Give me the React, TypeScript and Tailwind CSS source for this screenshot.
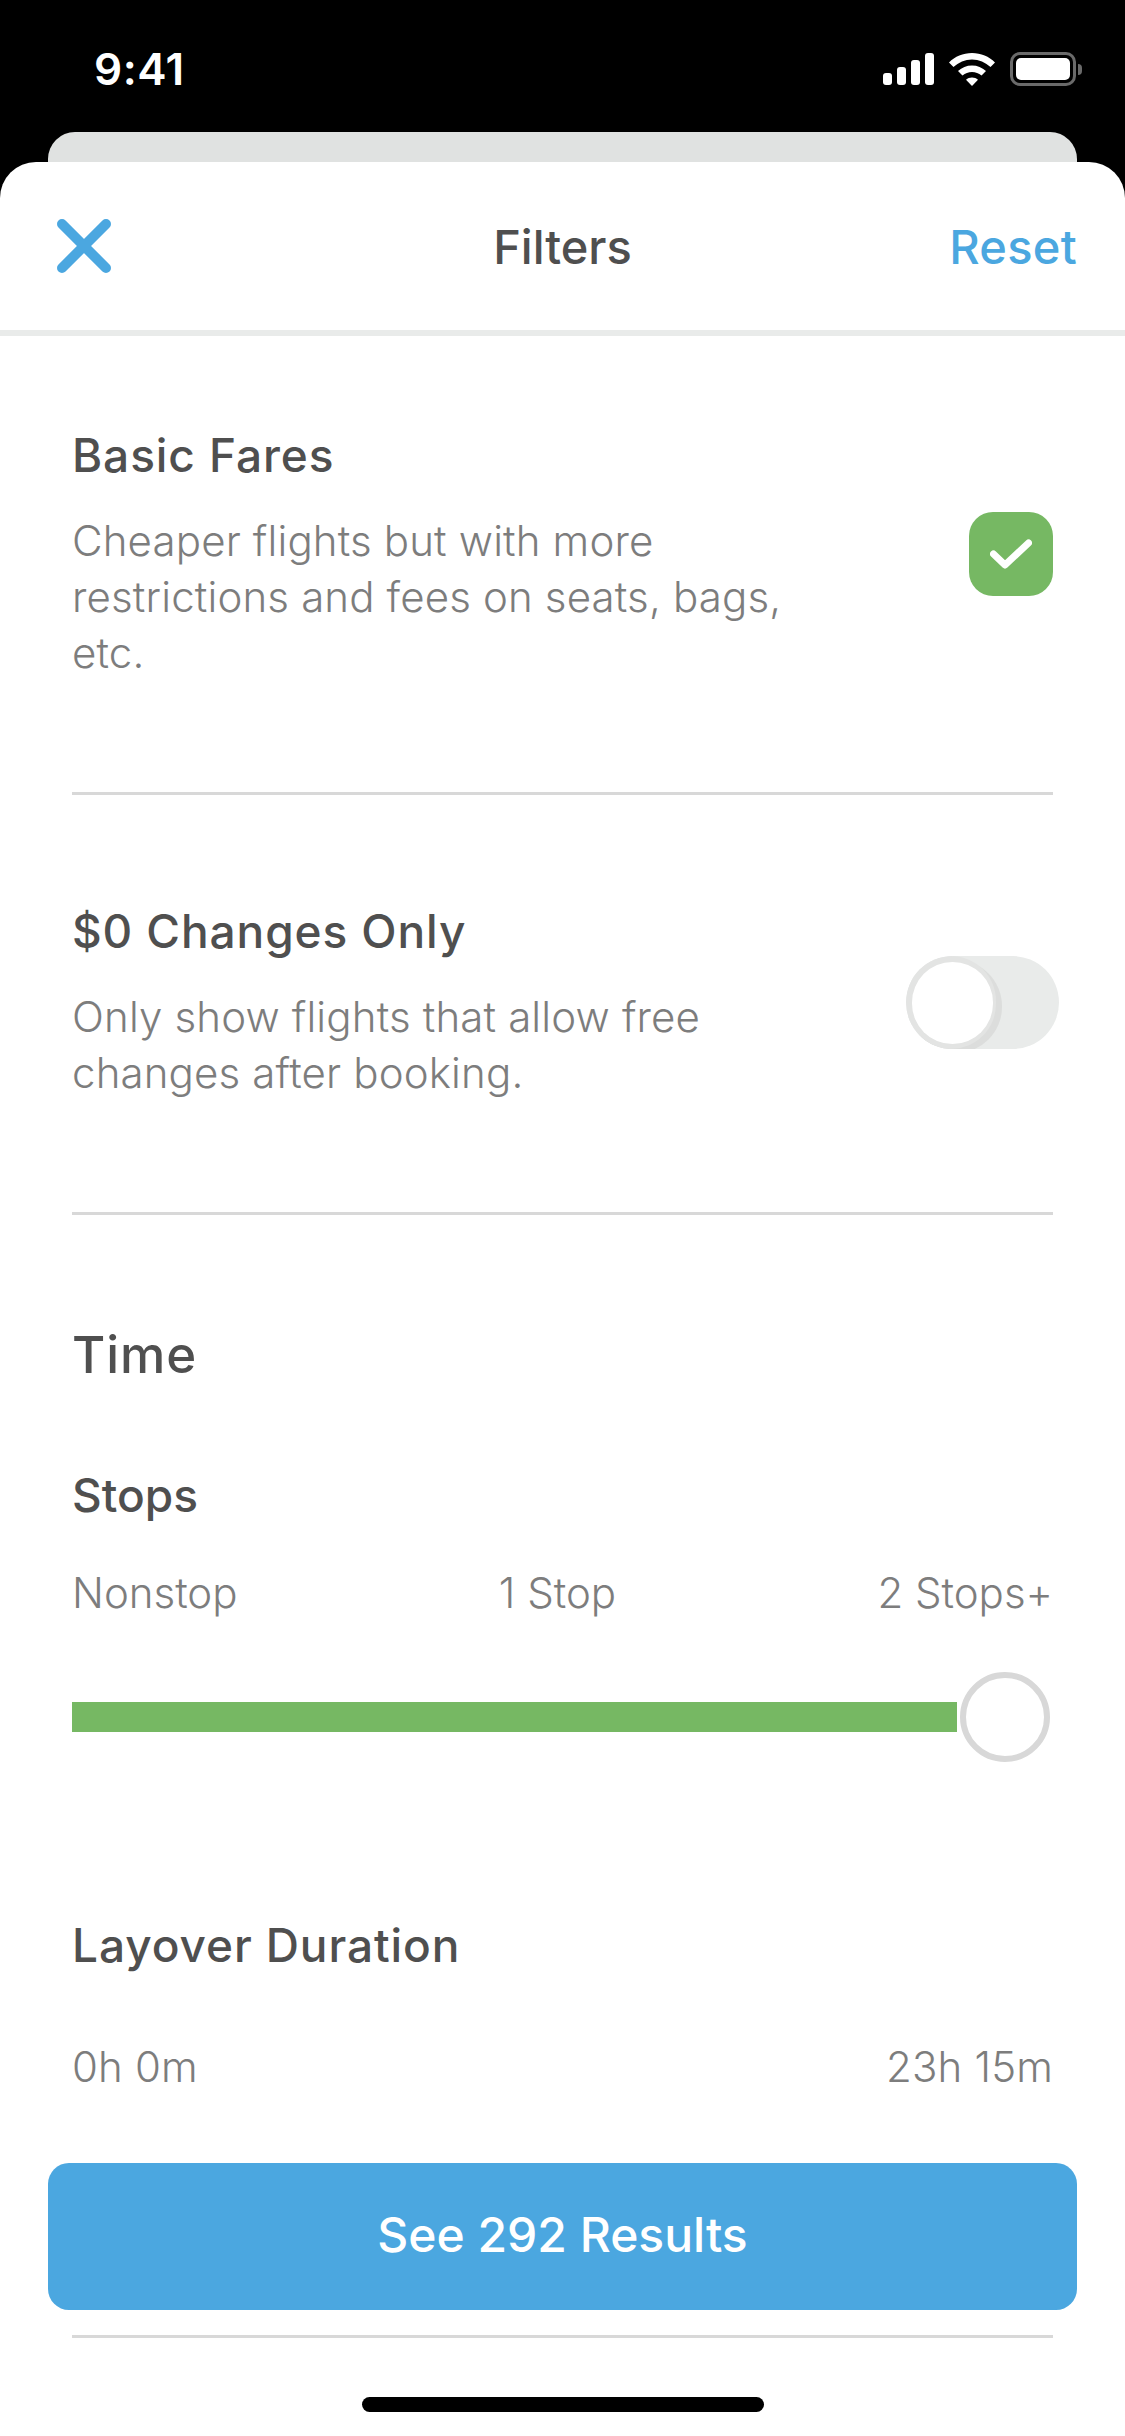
const CloseIcon = () => (
  <svg className="ml-[9px]" width="54" height="54" viewBox="0 0 54 54" fill="none">
    <path d="M5 5L49 49M49 5L5 49" stroke="#4ba7e0" strokeWidth="10" strokeLinecap="round" />
  </svg>
);

const StatusIcons = () => (
  <div className="flex items-center">
    <svg width="51" height="32" viewBox="0 0 51 32" fill="#fff">
      <rect x="0" y="20" width="9" height="12" rx="3" />
      <rect x="14" y="14" width="9" height="18" rx="3" />
      <rect x="28" y="7" width="9" height="25" rx="3" />
      <rect x="42" y="0" width="9" height="32" rx="3" />
    </svg>
    <svg className="ml-[15px]" width="46" height="33" viewBox="0 0 46 33" fill="#fff">
      <path d="M23 0C32 0 40 3.500 46 9.500L41.500 14C36.500 9.500 30 6.500 23 6.500C16 6.500 9.500 9.500 4.500 14L0 9.500C6 3.500 14 0 23 0Z" />
      <path d="M23 12.500C28.500 12.500 33 14.500 37 18L32.500 22.500C29.800 20.300 26.500 19 23 19C19.500 19 16.200 20.300 13.500 22.500L9 18C13 14.500 17.500 12.500 23 12.500Z" />
      <path d="M23 24.500C25.300 24.500 27.300 25.300 29 26.800L23 33L17 26.800C18.700 25.300 20.700 24.500 23 24.500Z" />
    </svg>
    <div className="ml-[15px] flex items-center">
      <div className="flex h-[34px] w-[66px] items-center justify-center rounded-[10px] border-[3px] border-[#6a6a6a]">
        <div className="h-[22px] w-[54px] rounded-[5px] bg-white" />
      </div>
      <div className="ml-[2px] h-[11px] w-[4px] rounded-r-full bg-[#6a6a6a]" />
    </div>
  </div>
);

const Toggle = () => (
  <div className="relative h-[93px] w-[153px] shrink-0 overflow-hidden rounded-full bg-[#e9ebea]">
    <div className="absolute left-[4px] top-[4px] h-[93px] w-[92px] rounded-full bg-[#dcdddc]" />
    <div className="absolute left-0 top-0 h-[93px] w-[90px] rounded-full bg-[#e3e4e3]" />
    <div className="absolute left-[6px] top-[6px] h-[82px] w-[81px] rounded-full bg-white" />
  </div>
);

const Divider = () => <div className="h-[3px] bg-[#d8d8d8]" />;

export default function App() {
  return (
    <div className="relative h-[2436px] w-[1125px] overflow-hidden bg-black font-['Inter',sans-serif]">
      <div className="flex h-[132px] items-start justify-between pl-[94px] pr-[43px] pt-[52px]">
        <span className="text-[44px] font-semibold leading-[34px] tracking-[0.5px] text-white">9:41</span>
        <StatusIcons />
      </div>

      <div className="mx-[48px] h-[60px] rounded-t-[27px] bg-[#e0e2e1]" />

      <div className="absolute inset-x-0 top-[162px] h-[2274px] rounded-t-[36px] bg-white">
        <header className="grid h-[168px] grid-cols-[1fr_auto_1fr] items-center px-[48px]">
          <CloseIcon />
          <h1 className="text-[47px] font-medium leading-none text-[#4f4f4f]">Filters</h1>
          <button className="justify-self-end text-[47px] font-medium leading-none tracking-[0.3px] text-[#4ba7e0]">Reset</button>
        </header>
        <div className="h-[6px] bg-[#e9ebea]" />

        <div className="px-[72px]">
          <section className="flex items-start justify-between pb-[111px] pt-[91px]">
            <div className="w-[730px]">
              <h2 className="text-[46px] font-medium leading-[56px] tracking-[0.9px] text-[#4f4f4f]">Basic Fares</h2>
              <p className="mt-[30px] text-[42px] font-light leading-[56px] tracking-[0.15px] text-[#7d7d7d]">
                Cheaper flights but with more restrictions and fees on seats, bags, etc.
              </p>
            </div>
            <div className="mt-[85px] flex h-[84px] w-[84px] items-center justify-center rounded-[24px] bg-[#76b863]">
              <svg width="42" height="30" viewBox="0 0 42 30" fill="none">
                <path d="M3.500 15L15 26L38.500 4" stroke="#fff" strokeWidth="7" strokeLinecap="round" strokeLinejoin="round" />
              </svg>
            </div>
          </section>
          <Divider />

          <section className="flex items-start justify-between pb-[111px] pt-[108px]">
            <div className="w-[730px]">
              <h2 className="text-[46px] font-medium leading-[56px] tracking-[0.9px] text-[#4f4f4f]">$0 Changes Only</h2>
              <p className="mt-[30px] text-[42px] font-light leading-[56px] tracking-[0.15px] text-[#7d7d7d]">
                Only show flights that allow free changes after booking.
              </p>
            </div>
            <div className="-mr-[6px] mt-[53px]">
              <Toggle />
            </div>
          </section>
          <Divider />

          <h2 className="mt-[112px] text-[51px] font-medium leading-[56px] tracking-[0.9px] text-[#4f4f4f]">Time</h2>

          <h3 className="mt-[84px] text-[46px] font-medium leading-[56px] text-[#4f4f4f]">Stops</h3>
          <div className="mt-[42px] flex justify-between text-[42px] font-light leading-[56px] text-[#7d7d7d]">
            <span>Nonstop</span>
            <span>1 Stop</span>
            <span>2 Stops+</span>
          </div>
          <div className="mt-[51px] flex h-[90px] items-center">
            <div className="h-[30px] w-[885px] bg-[#76b863]" />
            <div className="ml-[3px] h-[90px] w-[90px] rounded-full border-[6px] border-[#d8d8d8] bg-white" />
          </div>

          <h3 className="mt-[155px] text-[46px] font-medium leading-[56px] tracking-[0.9px] text-[#4f4f4f]">Layover Duration</h3>
          <div className="mt-[66px] flex justify-between text-[42px] font-light leading-[56px] tracking-[0.15px] text-[#7d7d7d]">
            <span>0h 0m</span>
            <span>23h 15m</span>
          </div>
        </div>

        <div className="absolute inset-x-[48px] top-[2001px] flex h-[147px] items-center justify-center rounded-[21px] bg-[#4ba7e0] pb-[4px] text-[48px] font-medium text-white">
          See 292 Results
        </div>
        <div className="absolute inset-x-[72px] top-[2173px] h-[3px] bg-[#d8d8d8]" />
        <div className="absolute left-[362px] top-[2235px] h-[15px] w-[402px] rounded-full bg-black" />
      </div>
    </div>
  );
}
